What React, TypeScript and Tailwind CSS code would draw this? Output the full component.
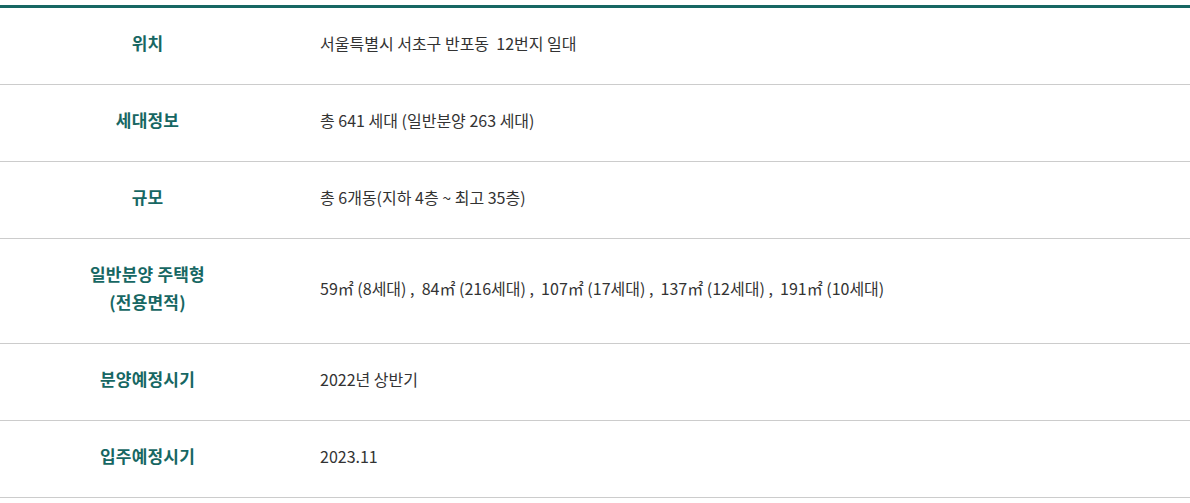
const rows: { label: React.ReactNode; value: React.ReactNode }[] = [
  { label: '위치', value: '서울특별시 서초구 반포동\u00a0 12번지 일대' },
  { label: '세대정보', value: '총 641 세대 (일반분양 263 세대)' },
  { label: '규모', value: '총 6개동(지하 4층 ~ 최고 35층)' },
  {
    label: (
      <>
        일반분양 주택형
        <br />
        (전용면적)
      </>
    ),
    value: '59㎡ (8세대) ,  84㎡ (216세대) ,  107㎡ (17세대) ,  137㎡ (12세대) ,  191㎡ (10세대)',
  },
  { label: '분양예정시기', value: '2022년 상반기' },
  { label: '입주예정시기', value: '2023.11' },
];

export default function App() {
  return (
    <div
      className="bg-white pt-[5px]"
      style={{ fontFamily: '"Noto Sans CJK KR", "Noto Sans", sans-serif' }}
    >
      <div className="border-t-[3px] border-[#176763]">
        {rows.map((r, i) => (
          <div key={i} className="grid grid-cols-[295px_1fr] border-b border-[#cccccc]">
            <div className="flex items-center justify-center pt-[21px] pb-[27px] text-center text-[17px] font-bold leading-[28px] tracking-[0.2px] text-[#176763]">
              <span>{r.label}</span>
            </div>
            <div className="flex items-center pt-[21px] pb-[27px] pl-[25px] text-[16px] leading-[28px] text-[#333333] whitespace-pre">
              {r.value}
            </div>
          </div>
        ))}
      </div>
    </div>
  );
}
